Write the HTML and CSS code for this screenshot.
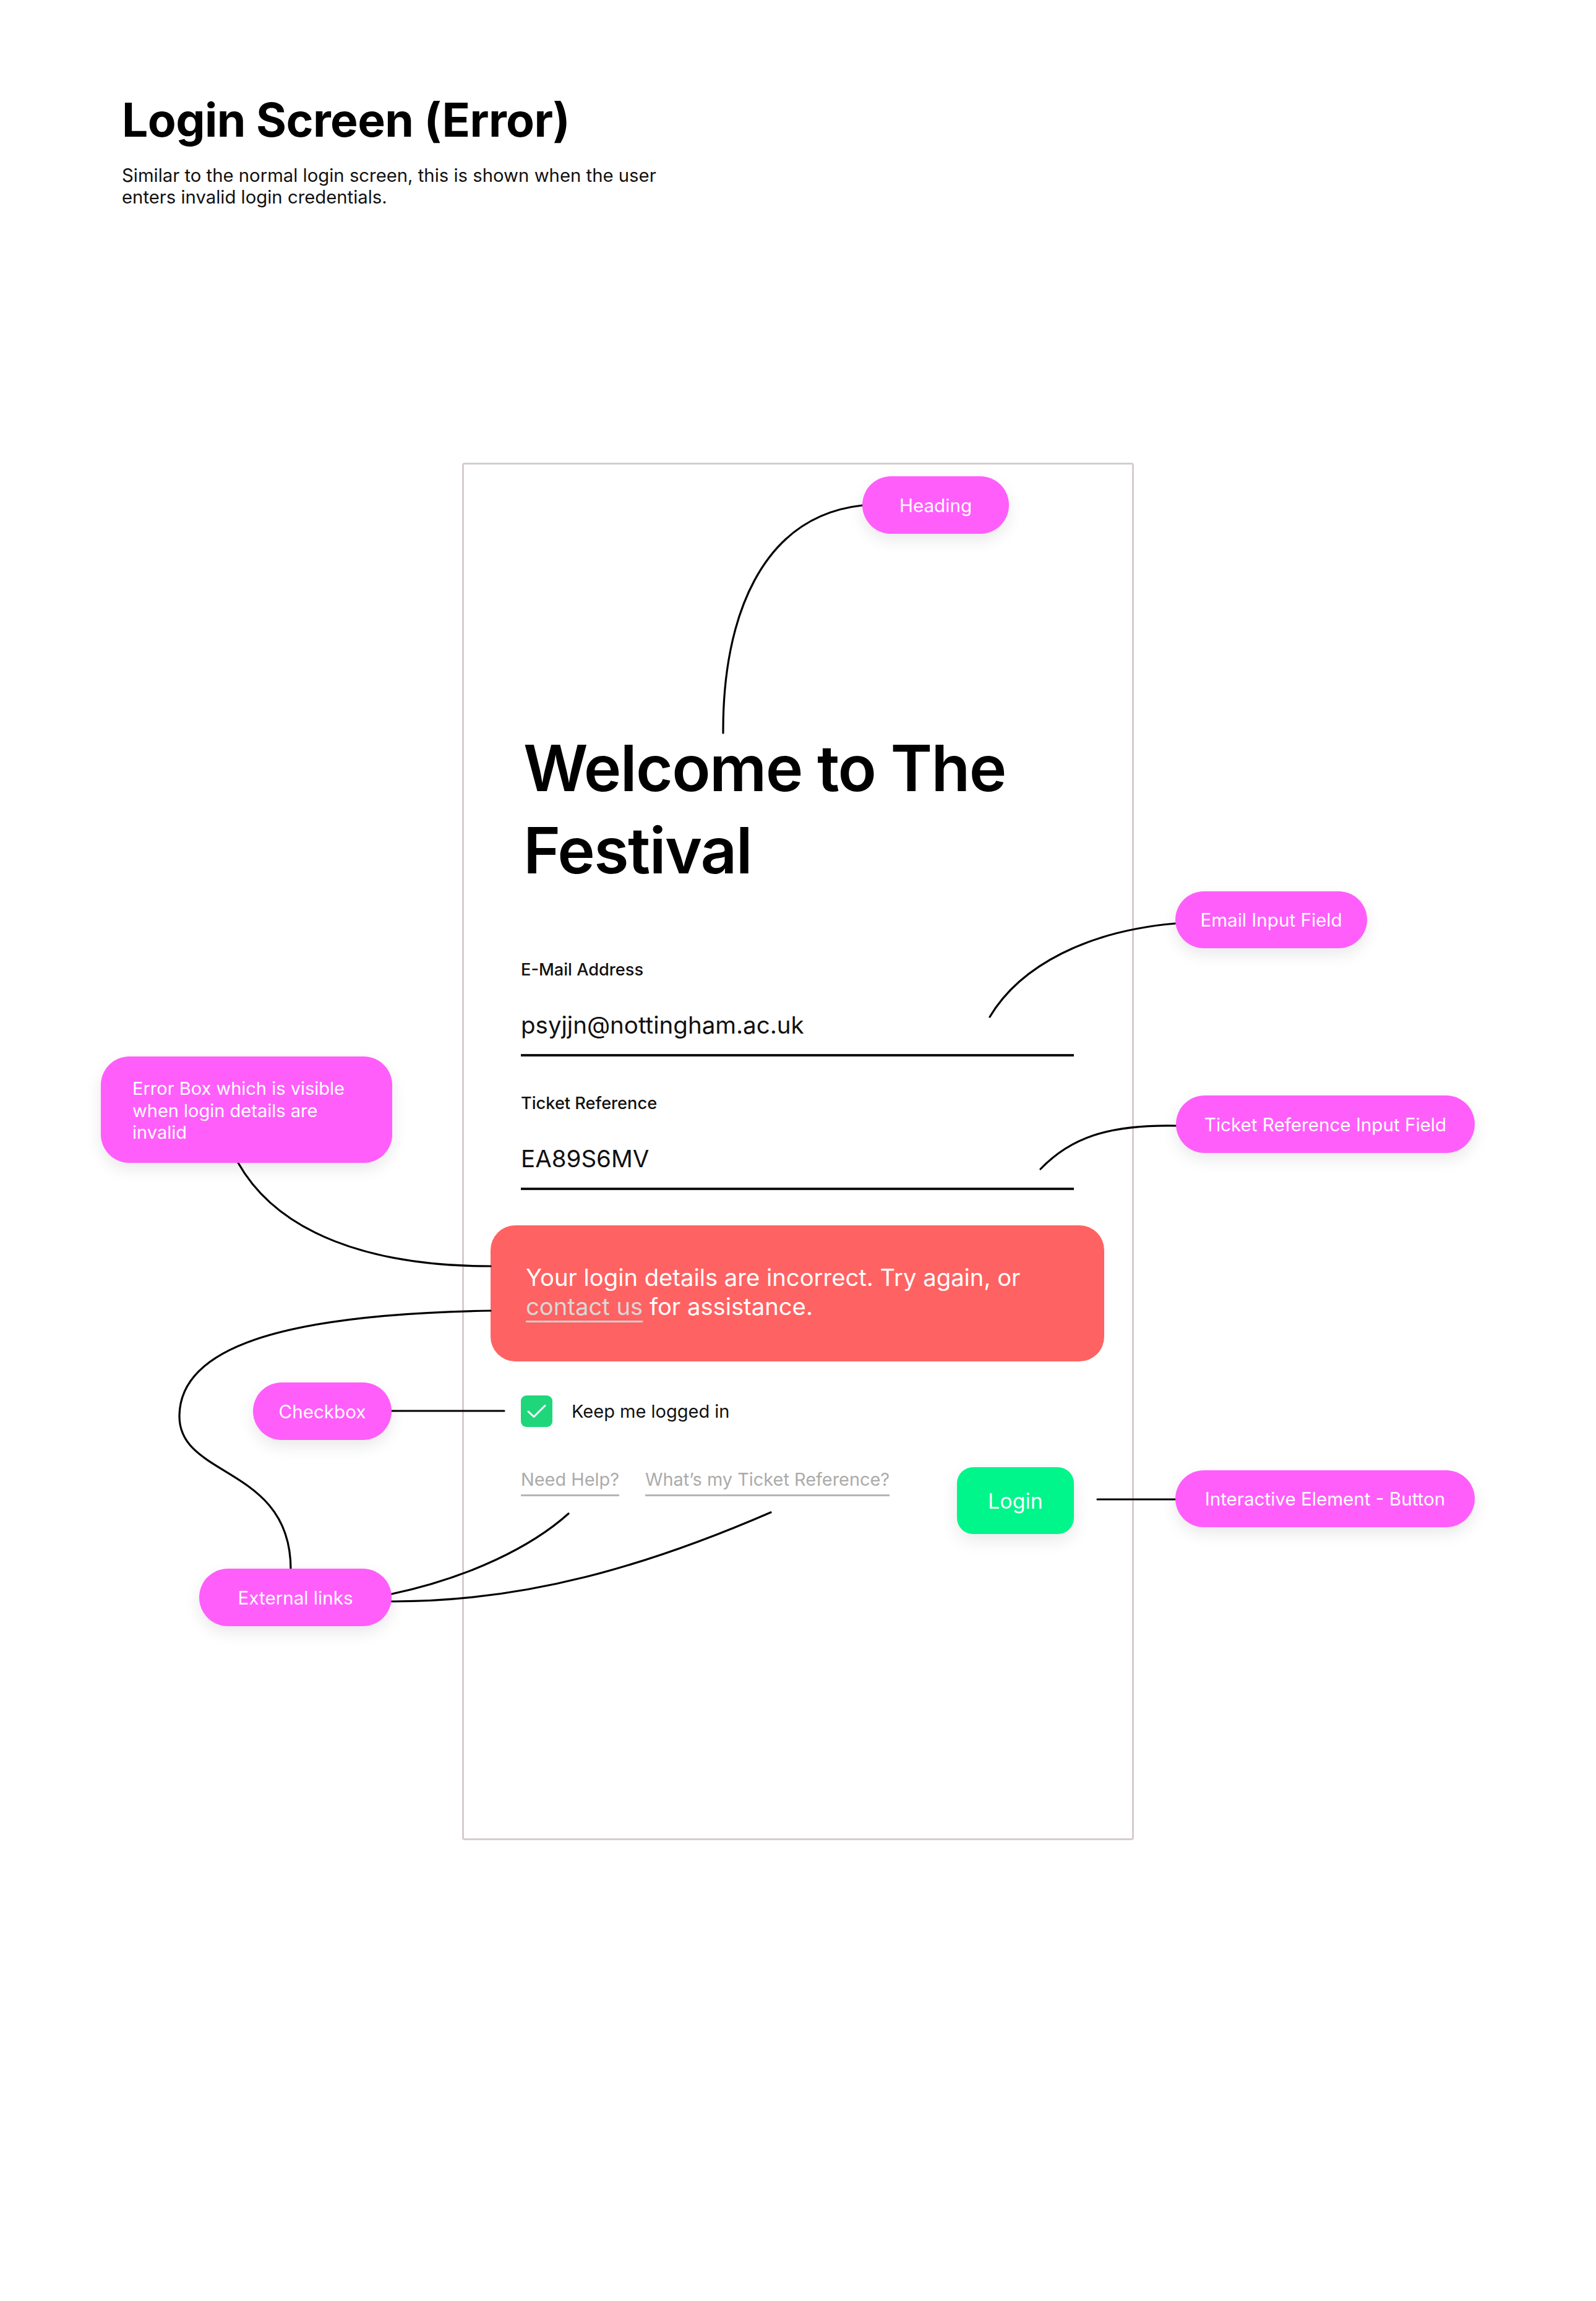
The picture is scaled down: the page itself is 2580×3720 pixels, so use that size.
FILE: index.html
```html
<!DOCTYPE html>
<html lang="en">
<head>
<meta charset="utf-8">
<title>Login Screen (Error)</title>
<link rel="stylesheet" href="styles.css">
</head>
<body>
<div class="page">
  <header class="intro">
    <h1 class="intro-title">Login Screen (Error)</h1>
    <p class="intro-text">Similar to the normal login screen, this is shown when the user<br>enters invalid login credentials.</p>
  </header>

  <main class="frame">
    <h2 class="welcome">Welcome to The<br>Festival</h2>

    <div class="field field-email">
      <div class="field-label">E-Mail Address</div>
      <div class="field-value">psyjjn@nottingham.ac.uk</div>
    </div>

    <div class="field field-ticket">
      <div class="field-label">Ticket Reference</div>
      <div class="field-value">EA89S6MV</div>
    </div>

    <div class="error-box">
      <p class="error-text">Your login details are incorrect. Try again, or<br><a class="error-link" href="#">contact us</a> for assistance.</p>
    </div>

    <div class="remember">
      <span class="checkbox">
        <svg viewBox="0 0 51 51" width="51" height="51" aria-hidden="true"><path d="M12 26 L21 34.5 L39 16.5" fill="none" stroke="#fff" stroke-width="3" stroke-linecap="round" stroke-linejoin="round"/></svg>
      </span>
      <span class="remember-label">Keep me logged in</span>
    </div>

    <div class="actions">
      <div class="links">
        <a class="link" href="#">Need Help?</a>
        <a class="link" href="#">What’s my Ticket Reference?</a>
      </div>
      <button class="login" type="button">Login</button>
    </div>
  </main>

  <svg class="connectors" width="2580" height="3720" viewBox="0 0 2580 3720" aria-hidden="true">
    <g fill="none" stroke="#000" stroke-width="3.2" stroke-linecap="round">
      <path d="M1394 817 C 1230 835 1168 1000 1169 1185"/>
      <path d="M1900 1493 C 1760 1505 1650 1560 1600 1644"/>
      <path d="M1901 1820 C 1790 1818 1730 1840 1682 1890"/>
      <path d="M385 1880 C 450 1995 600 2047 793 2047"/>
      <path d="M793 2119 C 450 2125 290 2180 290 2290 C 290 2390 470 2370 470 2537"/>
      <path d="M633 2281 H 815"/>
      <path d="M633 2577 C 760 2550 860 2500 919 2447"/>
      <path d="M633 2589 C 850 2590 1050 2530 1246 2445"/>
      <path d="M1774 2424 H 1900"/>
    </g>
  </svg>

  <div class="note note-heading">Heading</div>
  <div class="note note-email">Email Input Field</div>
  <div class="note note-ticket">Ticket Reference Input Field</div>
  <div class="note note-button">Interactive Element - Button</div>
  <div class="note note-error">Error Box which is visible<br>when login details are<br>invalid</div>
  <div class="note note-checkbox">Checkbox</div>
  <div class="note note-links">External links</div>
</div>
</body>
</html>
```

FILE: styles.css
```css
* { box-sizing: border-box; }

body {
  margin: 0;
  background: #ffffff;
  font-family: Inter, "Noto Sans", "Liberation Sans", sans-serif;
  color: #000;
}

.page {
  position: relative;
  width: 2580px;
  height: 3720px;
  overflow: hidden;
}

/* ---------- intro ---------- */
.intro {
  padding: 148px 0 0 197px;
}

.intro-title {
  margin: 0;
  font-weight: 700;
  font-size: 75px;
  line-height: 92px;
  letter-spacing: -0.6px;
}

.intro-text {
  margin: 26px 0 0;
  font-size: 29.3px;
  line-height: 35px;
  color: #111;
}

/* ---------- phone frame ---------- */
.frame {
  display: flex;
  flex-direction: column;
  width: 1086px;
  height: 2227px;
  margin: 412px auto 0;
  padding: 425px 94px 0 92px;
  border: 3px solid #d6cccc;
  border-radius: 4px;
  background: #fff;
}

.welcome {
  margin: 0 0 0 4px;
  font-weight: 600;
  font-size: 102.5px;
  line-height: 133px;
  letter-spacing: -1.6px;
}

.field {
  display: flex;
  flex-direction: column;
}

.field-email { margin-top: 110px; }
.field-ticket { margin-top: 60px; }

.field-label {
  font-weight: 500;
  font-size: 27.2px;
  line-height: 32px;
  color: #111;
}

.field-value {
  margin-top: 51px;
  padding-bottom: 25px;
  border-bottom: 4px solid #111;
  font-size: 38.5px;
  line-height: 44px;
  color: #111;
}

/* ---------- error ---------- */
.error-box {
  margin: 57px -49px 0;
  padding: 61px 57px 65px;
  border-radius: 40px;
  background: #ff6262;
}

.error-text {
  margin: 0;
  color: #fff;
  font-size: 38.2px;
  line-height: 47px;
}

.error-link {
  color: #d8d8d8;
  text-decoration: underline;
  text-decoration-color: #cfcfcf;
  text-decoration-thickness: 3px;
  text-underline-offset: 9px;
}

/* ---------- remember ---------- */
.remember {
  display: flex;
  align-items: center;
  gap: 31px;
  margin-top: 55px;
}

.checkbox {
  display: flex;
  width: 51px;
  height: 51px;
  border-radius: 9px;
  background: #1fd67b;
}

.remember-label {
  font-size: 29px;
  line-height: 51px;
  color: #111;
}

/* ---------- actions ---------- */
.actions {
  display: flex;
  justify-content: space-between;
  align-items: flex-start;
  margin-top: 65px;
}

.links {
  display: flex;
  gap: 42px;
  padding-top: 2px;
}

.link {
  padding-bottom: 6px;
  border-bottom: 3px solid #b5b5b5;
  color: #ababab;
  font-size: 28.9px;
  line-height: 36px;
  text-decoration: none;
}

.login {
  width: 189px;
  height: 108px;
  border: none;
  border-radius: 26px;
  background: #00f58b;
  color: #fff;
  font-family: Inter, "Noto Sans", sans-serif;
  font-size: 34px;
  box-shadow: 0 10px 28px rgba(0, 0, 0, 0.09);
}

/* ---------- annotations ---------- */
.connectors {
  position: absolute;
  left: 0;
  top: 0;
  pointer-events: none;
}

.note {
  position: absolute;
  display: flex;
  align-items: center;
  justify-content: center;
  height: 93px;
  border-radius: 47px;
  background: #ff5efb;
  color: #fff;
  font-size: 29.6px;
  line-height: 36px;
  box-shadow: 0 10px 26px rgba(0, 0, 0, 0.09);
  white-space: nowrap;
}

.note-heading  { left: 1394px; top: 770px;  width: 237px; }
.note-email    { left: 1900px; top: 1441px; width: 310px; height: 92px; }
.note-ticket   { left: 1901px; top: 1771px; width: 483px; }
.note-button   { left: 1900px; top: 2377px; width: 484px; height: 92px; }
.note-checkbox { left: 409px;  top: 2235px; width: 224px; }
.note-links    { left: 322px;  top: 2536px; width: 311px; }

.note-error {
  left: 163px;
  top: 1708px;
  width: 471px;
  height: 172px;
  display: block;
  padding: 34px 0 0 51px;
  border-radius: 46px;
  font-size: 29px;
  line-height: 35.5px;
  white-space: normal;
}
```
